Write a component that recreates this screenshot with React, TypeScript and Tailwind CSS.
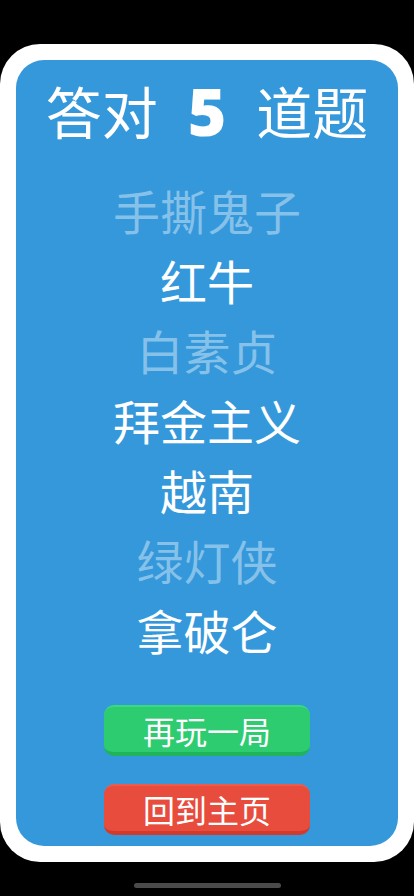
import React from "react";

const items: { t: string; faded: boolean }[] = [
  { t: "手撕鬼子", faded: true },
  { t: "红牛", faded: false },
  { t: "白素贞", faded: true },
  { t: "拜金主义", faded: false },
  { t: "越南", faded: false },
  { t: "绿灯侠", faded: true },
  { t: "拿破仑", faded: false },
];

export default function App() {
  return (
    <div
      className="w-[414px] h-[896px] bg-black overflow-hidden flex flex-col items-center"
      style={{ fontFamily: '"Noto Sans CJK SC", "Noto Sans", sans-serif' }}
    >
      <div className="mt-[44px] w-[414px] h-[818px] bg-white rounded-[40px] p-4">
        <div className="w-full h-full bg-[#3498db] rounded-[28px] flex flex-col items-center">
          <div className="mt-[20px] h-[60px] flex items-center text-white text-[56px] leading-none">
            <span>答对</span>
            <span
              className="mx-[30px] text-[66px] font-black"
              style={{ fontFamily: '"Open Sans", "Noto Sans", sans-serif' }}
            >
              5
            </span>
            <span>道题</span>
          </div>
          <div className="mt-[34px] flex flex-col items-center">
            {items.map((it) => (
              <div
                key={it.t}
                className={
                  "h-[70px] flex items-center text-[47px] leading-none " +
                  (it.faded ? "text-[#85c1e9]" : "text-white")
                }
              >
                {it.t}
              </div>
            ))}
          </div>
          <button className="mt-[41px] w-[206px] h-[51px] rounded-[10px] bg-[#2ecc71] border-t-2 border-t-[#3bd97d] border-b-4 border-b-[#1fb45a] text-white text-[32px] leading-none flex items-center justify-center">
            再玩一局
          </button>
          <button className="mt-[28px] w-[206px] h-[51px] rounded-[10px] bg-[#e74c3c] border-t-2 border-t-[#ef5b4b] border-b-4 border-b-[#d33a2b] text-white text-[32px] leading-none flex items-center justify-center">
            回到主页
          </button>
        </div>
      </div>
      <div className="mt-[21px] w-[147px] h-[5px] rounded-full bg-[#4a4a4a]" />
    </div>
  );
}
